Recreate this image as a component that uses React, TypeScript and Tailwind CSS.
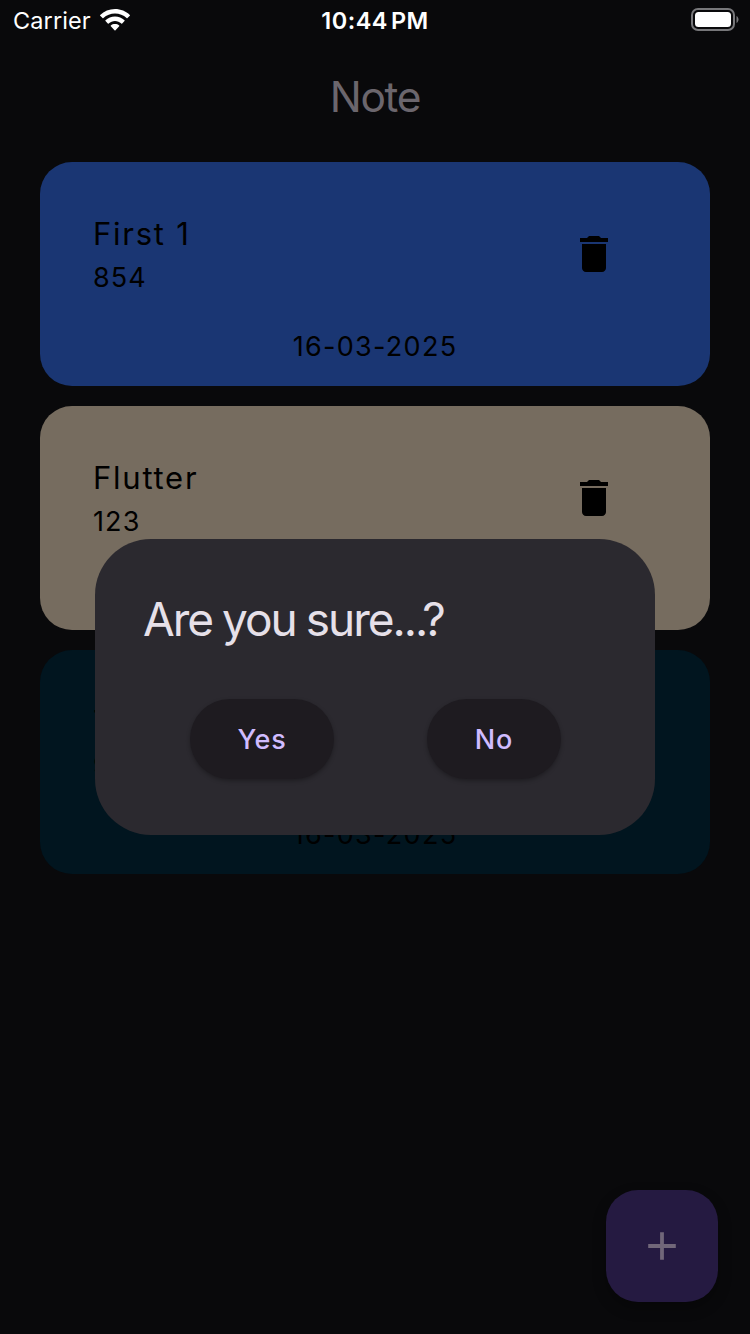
import React from "react";

type Note = { title: string; body: string; date: string; card: string };

const notes: Note[] = [
  { title: "First 1", body: "854", date: "16-03-2025", card: "bg-[#1a3673]" },
  { title: "Flutter", body: "123", date: "16-03-2025", card: "bg-[#766c5f]" },
  { title: "Third", body: "963", date: "16-03-2025", card: "bg-[#01151f]" },
];

function StatusBar() {
  return (
    <header className="grid h-10 grid-cols-3 items-start pl-[13px] pr-[11px] text-white">
      <div className="flex items-start gap-[9px]">
        <span className="pt-[1px] text-[23.5px] leading-10 font-normal tracking-[0.1px]">Carrier</span>
        <svg className="mt-[9px]" width="30" height="22" viewBox="0 0 30 22" fill="currentColor">
          <path d="M15 0C9.3 0 4 2.2.2 5.9c-.3.3-.3.6 0 .9l2.300 2.300c.3.3.6.3.9 0C6.500 6.200 10.600 4.600 15 4.600s8.500 1.600 11.600 4.500c.3.3.6.3.9 0l2.300-2.300c.3-.3.3-.6 0-.9C26 2.200 20.700 0 15 0Z" />
          <path d="M15 7.500c-3.700 0-7 1.400-9.500 3.700-.3.3-.3.6 0 .9l2.300 2.300c.3.3.6.3.9 0 1.700-1.500 3.900-2.400 6.300-2.400s4.600.9 6.300 2.400c.3.3.6.3.9 0l2.300-2.300c.3-.3.3-.6 0-.9-2.500-2.300-5.800-3.700-9.500-3.700Z" />
          <path d="M15 15c-1.600 0-3 .5-4.200 1.400-.3.3-.3.6 0 .9l3.700 3.900c.3.3.7.3 1 0l3.700-3.900c.3-.3.3-.6 0-.9C18 15.500 16.600 15 15 15Z" />
        </svg>
      </div>
      <div className="pt-[1px] text-center text-[23.500px] leading-10 font-semibold tracking-[0.5px] [word-spacing:-3.5px] whitespace-nowrap">
        <span className="mr-[2px]">10:44 PM</span>
      </div>
      <svg className="mt-2 justify-self-end" width="48" height="23" viewBox="0 0 48 23">
        <rect x="1" y="1" width="42" height="21" rx="6" fill="none" stroke="#77777a" strokeWidth="2" />
        <rect x="4" y="4" width="36" height="15" rx="3.500" fill="#fff" />
        <path d="M45.500 8c1.200.6 2 2 2 3.500s-.8 2.900-2 3.500Z" fill="#77777a" />
      </svg>
    </header>
  );
}

function TrashIcon() {
  return (
    <svg width="48" height="48" viewBox="0 0 24 24" fill="#000">
      <path d="M6 19c0 1.100.9 2 2 2h8c1.100 0 2-.9 2-2V7H6v12zM19 4h-3.500l-1-1h-5l-1 1H5v2h14V4z" />
    </svg>
  );
}

function NoteCard({ note }: { note: Note }) {
  return (
    <article className={`flex h-56 flex-col rounded-[32px] text-black ${note.card}`}>
      <div className="flex items-start justify-between pt-12 pr-[92px] pl-[53px]">
        <div>
          <h2 className="h-12 text-[31px] leading-[48px] font-normal tracking-[1.75px]">{note.title}</h2>
          <p className="text-[27px] leading-10 font-normal tracking-[1.1px]">{note.body}</p>
        </div>
        <button aria-label="Delete note" className="mt-5">
          <TrashIcon />
        </button>
      </div>
      <p className="mt-[28px] text-center text-[27px] leading-[41px] font-normal tracking-[1.3px]">{note.date}</p>
    </article>
  );
}

export default function App() {
  return (
    <div className="relative flex h-[1334px] w-[750px] flex-col overflow-hidden bg-[#09090b] font-['Inter','Liberation_Sans',sans-serif]">
      <StatusBar />
      <h1 className="mt-[25px] h-[65px] text-center text-[42.500px] leading-[64px] font-normal tracking-[-1.3px] text-[#6b666d]">
        Note
      </h1>
      <main className="mt-8 flex flex-col gap-5 px-10">
        {notes.map((note) => (
          <NoteCard key={note.title} note={note} />
        ))}
      </main>
      <div className="mt-auto mr-8 mb-8 flex size-28 items-center justify-center self-end rounded-[32px] bg-[#251a41] shadow-[0_6px_14px_rgba(0,0,0,0.3)]">
        <svg width="48" height="48" viewBox="0 0 24 24" fill="#716779">
          <path d="M18.900 12.950h-5.950v5.950h-1.900v-5.950h-5.950v-1.900h5.950v-5.950h1.900v5.950h5.950v1.900z" />
        </svg>
      </div>

      <div
        role="dialog"
        className="absolute top-[539px] left-[95px] flex h-[296px] w-[560px] flex-col rounded-[56px] bg-[#2b292f]"
      >
        <p className="mt-12 h-16 pl-12 text-[46px] leading-[64px] font-normal tracking-[-2px] [word-spacing:-1px] whitespace-nowrap text-[#e6e0e9]">
          Are you sure...?
        </p>
        <div className="mt-12 flex justify-between pr-[94px] pl-[95px]">
          <button className="h-20 w-36 rounded-full bg-[#1e1b20] pt-[2px] text-[27px] font-medium tracking-[0.8px] text-[#d0bcff] shadow-[0_2px_4px_rgba(0,0,0,0.3)]">
            Yes
          </button>
          <button className="h-20 w-[134px] rounded-full bg-[#1e1b20] pt-[2px] text-[27px] font-medium tracking-[0.8px] text-[#d0bcff] shadow-[0_2px_4px_rgba(0,0,0,0.3)]">
            No
          </button>
        </div>
      </div>
    </div>
  );
}
